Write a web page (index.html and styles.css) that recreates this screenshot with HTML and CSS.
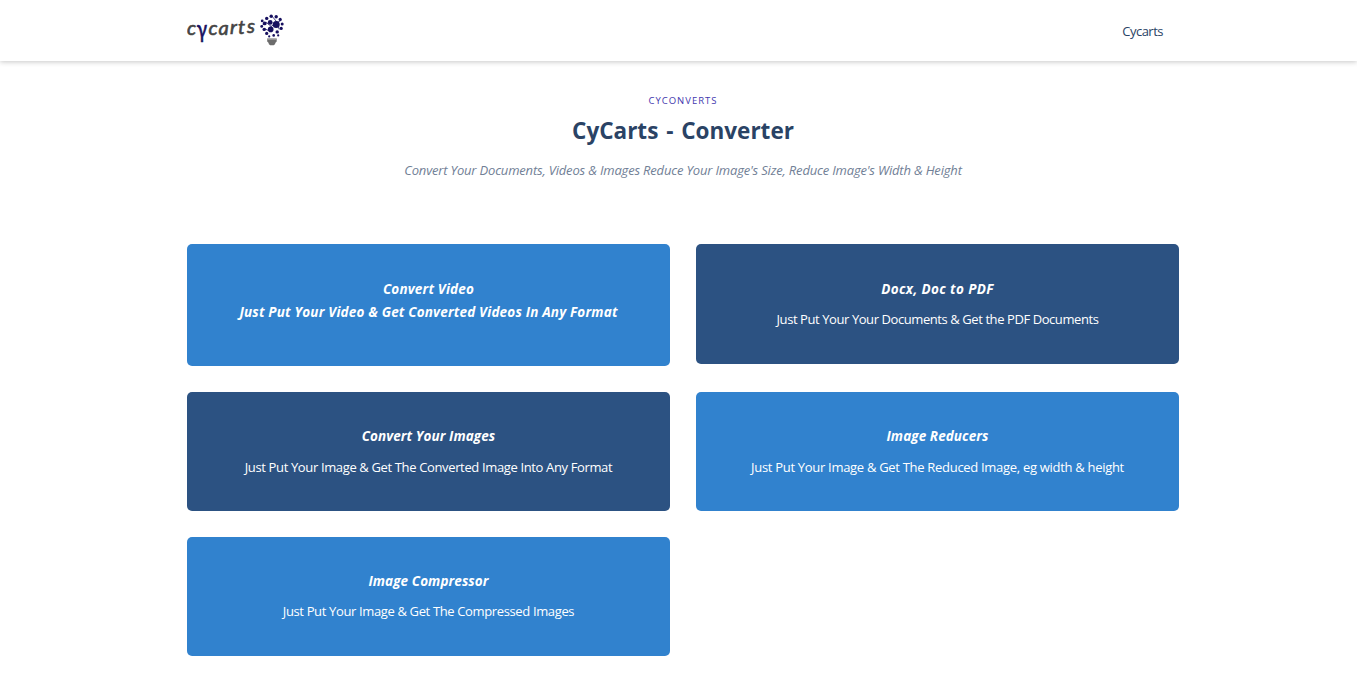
FILE: index.html
```html
<!DOCTYPE html>
<html lang="en">
<head>
<meta charset="utf-8">
<title>CyCarts - Converter</title>
<link rel="stylesheet" href="styles.css">
</head>
<body>
<header class="header">
  <div class="container nav">
    <svg class="logo" width="100" height="36" viewBox="0 0 100 36" role="img" aria-label="cycarts">
      <g class="logo-text">
        <text x="0" y="21.500">c</text>
        <text class="logo-y" transform="translate(9.800 24.500) scale(.9 1.200)">γ</text>
        <text x="21.500 31.500 43 51 60" y="21.500 21.500 21 20.500 20">carts</text>
      </g>
      <g transform="translate(-.8 -1.600)">
      <path d="M85 15L91 11M85 15L80 11M85 15L84 20M91 11L86 5M91 11L95 9M80 11L76 14M84 20L78 17M91 11L93 18" stroke="#1a1464" stroke-width=".8"/>
      <g fill="#17105f">
        <circle cx="90" cy="13" r="3.500"/><circle cx="84" cy="11" r="2.400"/><circle cx="84.500" cy="18" r="2.800"/>
        <circle cx="78.500" cy="12" r="1.900"/><circle cx="80.500" cy="7" r="1.700"/><circle cx="85" cy="4.800" r="1.700"/>
        <circle cx="90" cy="5.300" r="1.700"/><circle cx="94" cy="8" r="1.600"/><circle cx="96" cy="12.500" r="1.500"/>
        <circle cx="95" cy="17" r="1.600"/><circle cx="91" cy="20.500" r="1.700"/><circle cx="87.500" cy="24" r="1.300"/>
        <circle cx="80.500" cy="22" r="1.600"/><circle cx="78" cy="18" r="1.700"/><circle cx="75.500" cy="15" r="1.400"/>
        <circle cx="76" cy="9.500" r="1.400"/><circle cx="83" cy="25" r="1.100"/><circle cx="92" cy="24" r="1.100"/>
      </g>
      <path d="M81 27h9.500v3l-1.500 1.500v1l-1.500 1.300h-3.500l-1.500-1.300v-1L81 30z" fill="#6c6c6c"/>
      <path d="M81 27.800h9.500" stroke="#aaa"/>
      </g>
    </svg>
    <a class="nav-link">Cycarts</a>
  </div>
</header>
<main class="container">
  <section class="hero">
    <div class="eyebrow">CYCONVERTS</div>
    <h1 class="title">CyCarts - Converter</h1>
    <p class="subtitle">Convert Your Documents, Videos &amp; Images Reduce Your Image's Size, Reduce Image's Width &amp; Height</p>
  </section>
  <section class="cards">
    <article class="card card-tall"><h2 class="card-title">Convert Video</h2><h2 class="card-title">Just Put Your Video &amp; Get Converted Videos In Any Format</h2></article>
    <article class="card card-dark card-top"><h2 class="card-title title-wide">Docx, Doc to PDF</h2><p class="card-text text-tight">Just Put Your Your Documents &amp; Get the PDF Documents</p></article>
    <article class="card card-dark"><h2 class="card-title title-snug">Convert Your Images</h2><p class="card-text">Just Put Your Image &amp; Get The Converted Image Into Any Format</p></article>
    <article class="card"><h2 class="card-title title-snug">Image Reducers</h2><p class="card-text text-loose">Just Put Your Image &amp; Get The Reduced Image, eg width &amp; height</p></article>
    <article class="card card-last"><h2 class="card-title title-snug">Image Compressor</h2><p class="card-text">Just Put Your Image &amp; Get The Compressed Images</p></article>
  </section>
</main>
</body>
</html>
```
FILE: styles.css
```css
* { box-sizing: border-box; }
body { margin: 0; background: #fff; font-family: "Segoe UI", "Open Sans", "Noto Sans", sans-serif; font-size: 13px; overflow: hidden; }
h1, h2, p { margin: 0; }
.header { height: 61px; background: #fff; box-shadow: 0 1px 5px rgba(0, 0, 0, .22); }
.container { width: 992px; margin-left: 187px; }
.nav { height: 61px; display: flex; align-items: center; justify-content: space-between; padding-right: 16px; }
.logo { display: block; }
.logo-text { font-family: Lato, sans-serif; font-weight: 400; font-style: italic; font-size: 20px; fill: #444; stroke: #444; stroke-width: .6px; }
.logo-y { fill: #17105f; stroke: #17105f; font-size: 21px; font-style: normal; }
.nav-link { color: #2a4365; font-size: 13px; line-height: 20px; letter-spacing: -.5px; }
.hero { padding-top: 33px; height: 183px; text-align: center; white-space: nowrap; }
.eyebrow { font-size: 9.5px; line-height: 14px; letter-spacing: 1px; color: #4338ae; }
.title { margin-top: 7px; font-size: 22.5px; line-height: 32px; font-weight: 700; word-spacing: 2px; color: #2a4365; }
.subtitle { margin-top: 13px; font-size: 13px; line-height: 20px; letter-spacing: -.18px; font-style: italic; color: #718096; }
.cards { display: grid; grid-template-columns: 483px 483px; gap: 26px; align-items: start; }
.card { height: 119px; padding-top: 33px; border-radius: 5px; background: #3182ce; color: #fff; text-align: center; white-space: nowrap; }
.card-tall { height: 122px; padding-top: 34px; }
.card-top { height: 120px; padding-top: 34px; }
.card-dark { background: #2c5282; }
.card-title { font-size: 13.5px; line-height: 23px; letter-spacing: .18px; font-weight: 700; font-style: italic; }
.title-wide { letter-spacing: .38px; }
.title-snug { letter-spacing: .08px; }
.card-text { margin-top: 9px; font-size: 13px; line-height: 20px; letter-spacing: -.36px; }
.card-top .card-text, .card-last .card-text { margin-top: 8px; }
.text-tight { letter-spacing: -.42px; }
.text-loose { letter-spacing: -.3px; }
```
